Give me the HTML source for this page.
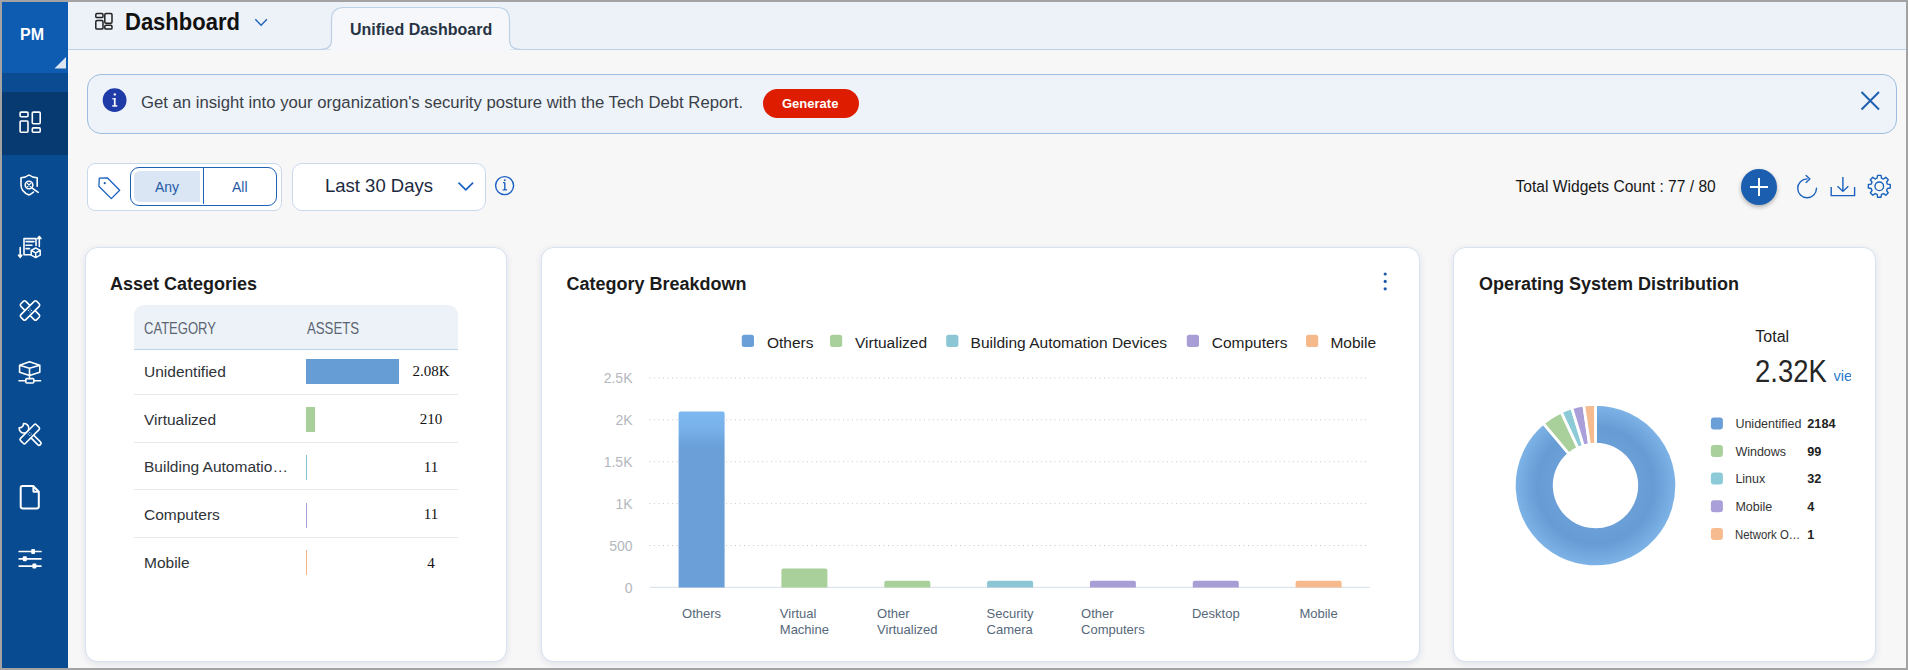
<!DOCTYPE html>
<html><head><meta charset="utf-8">
<style>
*{box-sizing:border-box;margin:0;padding:0}
html,body{width:1908px;height:670px;overflow:hidden;background:#f7f7f8}
body{font-family:"Liberation Sans",sans-serif;position:relative}
.a{position:absolute;white-space:nowrap;line-height:1}
#border{position:absolute;left:0;top:0;width:1908px;height:670px;border:2px solid #a3a3a3;z-index:50}
.blk{position:absolute}
.ico{position:absolute;overflow:visible}
.card{position:absolute;top:247px;height:415px;background:#fff;border:1px solid #d6e2f0;border-radius:12.5px;box-shadow:0 2px 7px rgba(20,40,70,0.10)}
</style></head><body>
<div id="border"></div>

<!-- SIDEBAR -->
<div class="blk" style="left:2px;top:2px;width:66px;height:666px;background:#084b91"></div>
<div class="blk" style="left:2px;top:2px;width:66px;height:71px;background:#0d5cb2"></div>
<div class="blk" style="left:2px;top:73px;width:66px;height:19px;background:#0a4b92"></div>
<div class="blk" style="left:2px;top:92px;width:66px;height:63px;background:#083a72"></div>
<div class="a" style="left:20px;top:26px;font:bold 16px 'Liberation Sans';color:#fff">PM</div>
<svg class="ico" style="left:0;top:0" width="1908" height="670" fill="none" stroke="#fff" stroke-width="1.6" stroke-linecap="round" stroke-linejoin="round">
  <path d="M66 57 L66 68.5 L54.5 68.5 Z" fill="#dce6f2" stroke="none"/>
  <!-- dashboard -->
  <rect x="20.1" y="112.1" width="7.9" height="4.7" rx="1"/>
  <rect x="20.1" y="121" width="7.9" height="11.3" rx="1"/>
  <rect x="32.3" y="112.1" width="7.9" height="11.6" rx="1"/>
  <rect x="32.3" y="127.9" width="7.9" height="4.4" rx="1"/>
  <!-- shield -->
  <path d="M37.2 186.2 V177.8 C33.5 177.6 31 176.6 29 175 C27 176.6 24.5 177.6 21 177.8 V185 C21 189.5 24.5 193.2 29 195 C30.8 194.3 32.3 193.3 33.5 192"/>
  <circle cx="29" cy="185" r="3.8" stroke-width="1.6"/>
  <path d="M27.4 183.4 L30.6 186.6 M30.6 183.4 L27.4 186.6" stroke-width="1.2"/>
  <path d="M31.8 187.8 L38.2 192.4"/>
  <!-- doc w/ cube -->
  <path d="M30.5 254.8 H24 V238.6 H36 V245.5" />
  <path d="M26 241.6 H34 M26 245.2 H32 M26 248.6 H29.5" />
  <path d="M20.2 247.5 V257 M18.6 255.2 L20.2 257.3 L21.8 255.2" />
  <path d="M39.3 246.5 V236.8 M37.7 238.6 L39.3 236.5 L40.9 238.6" />
  <path d="M35.7 248 L40.2 250.4 V255.2 L35.7 257.6 L31.2 255.2 V250.4 Z M31.2 250.4 L35.7 252.8 L40.2 250.4 M35.7 252.8 V257.6" stroke-width="1.5"/>
  <!-- bandage -->
  <g transform="translate(30 310.5)">
    <rect x="-11.2" y="-3.5" width="22.4" height="7" rx="1.8" transform="rotate(45)"/>
    <rect x="-11.2" y="-3.5" width="22.4" height="7" rx="1.8" transform="rotate(-45)" fill="#084b91"/>
    <circle cx="0" cy="-1.5" r="0.55" fill="#fff" stroke="none"/><circle cx="0" cy="1.5" r="0.55" fill="#fff" stroke="none"/><circle cx="-1.5" cy="0" r="0.55" fill="#fff" stroke="none"/><circle cx="1.5" cy="0" r="0.55" fill="#fff" stroke="none"/>
  </g>
  <!-- network cube -->
  <path d="M29.5 361.8 L39.8 365.2 V372.2 L29.5 375.6 L19.6 372.2 V365.2 Z M19.6 365.2 L29.5 368.2 L39.8 365.2 M29.5 368.2 V375.6 M29.5 375.6 V378.6 M19 380.8 H25.6 M33.8 380.8 H40.6"/>
  <rect x="25.8" y="378.6" width="8" height="4.4" rx="1"/>
  <!-- tools -->
  <g transform="translate(29.8 434)">
    <rect x="0" y="-1.9" width="15" height="3.8" rx="1.9" transform="rotate(45)"/>
    <path d="M-6.3 -10.5 A4.8 4.8 0 1 1 -10.6 -6.2 L-8.3 -6.6 L-6.6 -8.3 Z" fill="#084b91"/>
    <rect x="-11.2" y="-3.5" width="22.4" height="7" rx="1.6" transform="rotate(-45)" fill="#084b91"/>
    <circle cx="0" cy="-1.5" r="0.55" fill="#fff" stroke="none"/><circle cx="0" cy="1.5" r="0.55" fill="#fff" stroke="none"/><circle cx="-1.5" cy="0" r="0.55" fill="#fff" stroke="none"/><circle cx="1.5" cy="0" r="0.55" fill="#fff" stroke="none"/>
  </g>
  <!-- document -->
  <path d="M33.2 486 H22.5 Q20.7 486 20.7 487.8 V506.6 Q20.7 508.4 22.5 508.4 H37 Q38.8 508.4 38.8 506.6 V491.8 Z M33.4 486.2 V491.2 Q33.4 491.8 34 491.8 H38.6" stroke-width="2"/>
  <!-- sliders -->
  <path d="M19.2 551.5 H41 M19.2 558.8 H41 M19.2 566.1 H41" stroke-width="1.7"/>
  <rect x="31.2" y="549" width="3.8" height="5" rx="1" fill="#fff" stroke="none"/>
  <rect x="22.8" y="556.3" width="4" height="5" rx="1" fill="#fff" stroke="none"/>
  <rect x="32.4" y="563.6" width="4" height="5" rx="1" fill="#fff" stroke="none"/>
</svg>

<!-- HEADER -->
<div class="blk" style="left:68px;top:2px;width:1838px;height:48px;background:#edf1f8;border-bottom:1px solid #bcd0e6"></div>
<svg class="ico" style="left:0;top:0" width="1908" height="60" fill="none" stroke="#222" stroke-width="1.5">
  <rect x="95.8" y="13.6" width="7.2" height="4" rx="1.2"/>
  <rect x="95.8" y="20.5" width="7.2" height="8.6" rx="1.2"/>
  <rect x="104.8" y="13.6" width="7.2" height="9.6" rx="1.2"/>
  <rect x="104.8" y="25.2" width="7.2" height="3.9" rx="1.2"/>
  <path d="M255.3 19.3 L261.1 25.2 L266.9 19.3" stroke="#1f62b8" stroke-width="1.4"/>
  <!-- tab -->
  <path d="M320 49.5 Q331.5 49.5 331.5 40 V20 Q331.5 7.5 344 7.5 H497 Q509.5 7.5 509.5 20 V40 Q509.5 49.5 521 49.5" fill="#f5f7fa" stroke="#bcd0e6" stroke-width="1.2"/>
</svg>
<div class="blk" style="left:331px;top:48px;width:179px;height:3px;background:#f5f7fa"></div>
<div class="a" style="left:125px;top:8px;font:bold 22px 'Liberation Sans';color:#111;transform:scaleY(1.08);transform-origin:0 0">Dashboard</div>
<div class="a" style="left:350px;top:20.5px;font:bold 16px 'Liberation Sans';color:#273444">Unified Dashboard</div>

<!-- BANNER -->
<div class="blk" style="left:87px;top:74px;width:1810px;height:60px;background:#eef3fa;border:1px solid #9dbde3;border-radius:14px"></div>
<svg class="ico" style="left:0;top:60px" width="1908" height="80">
  <circle cx="114.6" cy="40.2" r="11.9" fill="#1e3ba8"/>
  <rect x="113.9" y="38.2" width="1.7" height="8.3" fill="#fff"/>
  <rect x="112.2" y="45.2" width="5.1" height="1.4" fill="#fff"/>
  <rect x="112.3" y="38.2" width="3.3" height="1.2" fill="#fff"/>
  <circle cx="114.8" cy="34.4" r="1.2" fill="#fff"/>
  <path d="M1861.5 32 L1879 49.5 M1879 32 L1861.5 49.5" stroke="#1f5fb0" stroke-width="2"/>
</svg>
<div class="a" style="left:141px;top:93px;font:16.7px 'Liberation Sans';color:#3a3f47">Get an insight into your organization's security posture with the Tech Debt Report.</div>
<div class="blk" style="left:763px;top:89px;width:96px;height:29px;background:#dd1c00;border-radius:15px"></div>
<div class="a" style="left:782px;top:96px;font:bold 13px 'Liberation Sans';color:#fff">Generate</div>

<!-- FILTERS -->
<div class="blk" style="left:87px;top:163px;width:195px;height:48px;background:#fff;border:1px solid #c9d9ec;border-radius:8px"></div>
<div class="blk" style="left:130px;top:167px;width:147px;height:39px;background:#fff;border:1.5px solid #1c62b6;border-radius:9px;overflow:hidden">
  <div class="blk" style="left:2.5px;top:2.5px;width:66.5px;height:31.5px;background:#dae6f3;border-radius:6px 0 0 6px"></div>
  <div class="blk" style="left:71.6px;top:0;width:1.4px;height:36px;background:#1c62b6"></div>
</div>
<div class="a" style="left:155px;top:179px;font:14px 'Liberation Sans';color:#1f5aa8">Any</div>
<div class="a" style="left:232px;top:179px;font:14px 'Liberation Sans';color:#1f5aa8">All</div>
<div class="blk" style="left:292px;top:163px;width:194px;height:48px;background:#fff;border:1px solid #c9d9ec;border-radius:10px"></div>
<svg class="ico" style="left:0;top:150px" width="600" height="70" fill="none" stroke="#1a60c0" stroke-width="1.3" stroke-linejoin="round">
  <path d="M99.3 28.2 L107.3 27.8 L119.7 40.2 L111.3 48.6 L98.9 36.2 Z"/>
  <circle cx="104.7" cy="33.2" r="1.1" fill="#1f5aa8" stroke="none"/>
  <path d="M458.5 32.6 L465.8 39.9 L473.1 32.6" stroke-width="1.6"/>
  <circle cx="504.6" cy="35.6" r="9" stroke-width="1.4"/>
  <path d="M504.8 32.6 V39.8 M502.6 39.9 H507 M503 32.6 H504.8" stroke-width="1.4"/>
  <circle cx="504.8" cy="30.2" r="0.9" fill="#1f5aa8" stroke="none"/>
</svg>
<div class="a" style="left:325px;top:175px;font:18.5px 'Liberation Sans';color:#1b2a3e">Last 30 Days</div>

<div class="a" style="left:1515.5px;top:177.8px;font:15.6px 'Liberation Sans';color:#161616">Total Widgets Count : 77 / 80</div>
<div class="blk" style="left:1741px;top:169px;width:36px;height:36px;background:#1b5eb0;border-radius:50%;box-shadow:0 2px 4px rgba(0,0,0,0.3)"></div>
<svg class="ico" style="left:0;top:150px" width="1908" height="70" fill="none" stroke="#1a62bd" stroke-width="1.4" stroke-linecap="round" stroke-linejoin="round">
  <path d="M1750 37 H1768 M1759 28 V46" stroke="#fff" stroke-width="2" stroke-linecap="butt"/>
  <path d="M1816.5 38.3 A9.4 9.4 0 1 1 1807.1 28.9"/>
  <path d="M1806.1 25.5 L1809.9 29 L1806.1 32.4"/>
  <path d="M1842.9 26.9 V41.3 M1837.5 36.2 L1842.9 41.4 L1848.3 36.2 M1831.2 37 V45.6 H1854.6 V37" stroke-linecap="butt" stroke-linejoin="miter"/>
  <path d="M1877.13 178.19 L1877.56 175.34 L1881.04 175.34 L1881.47 178.19 L1883.50 179.03 L1885.82 177.32 L1888.28 179.78 L1886.57 182.10 L1887.41 184.13 L1890.26 184.56 L1890.26 188.04 L1887.41 188.47 L1886.57 190.50 L1888.28 192.82 L1885.82 195.28 L1883.50 193.57 L1881.47 194.41 L1881.04 197.26 L1877.56 197.26 L1877.13 194.41 L1875.10 193.57 L1872.78 195.28 L1870.32 192.82 L1872.03 190.50 L1871.19 188.47 L1868.34 188.04 L1868.34 184.56 L1871.19 184.13 L1872.03 182.10 L1870.32 179.78 L1872.78 177.32 L1875.10 179.03 Z" transform="translate(0 -150)"/>
  <circle cx="1879.3" cy="36.3" r="4.3"/>
</svg>

<!-- CARDS -->
<!-- CARD 1 -->
<div class="card" style="left:85px;width:422px"></div>
<div class="a" style="left:110px;top:274.28px;font:bold 18px 'Liberation Sans';color:#1b1b1b;">Asset Categories</div>
<div class="blk" style="left:134px;top:305px;width:324px;height:44.5px;background:#edf2f9;border-radius:10px 10px 0 0;border-bottom:1.5px solid #bcd2e8"></div>
<div class="a" style="left:144px;top:319.36px;font:16.5px 'Liberation Sans';color:#5b6571;transform:scaleX(0.79);transform-origin:0 0">CATEGORY</div>
<div class="a" style="left:306.5px;top:319.36px;font:16.5px 'Liberation Sans';color:#5b6571;transform:scaleX(0.80);transform-origin:0 0">ASSETS</div>
<div class="blk" style="left:134px;top:393.8px;width:324px;height:1px;background:#e6e9ed"></div>
<div class="blk" style="left:134px;top:441.9px;width:324px;height:1px;background:#e6e9ed"></div>
<div class="blk" style="left:134px;top:489.0px;width:324px;height:1px;background:#e6e9ed"></div>
<div class="blk" style="left:134px;top:536.7px;width:324px;height:1px;background:#e6e9ed"></div>
<div class="a" style="left:144px;top:362.98px;font:15.5px 'Liberation Sans';color:#2f3338;">Unidentified</div>
<div class="blk" style="left:305.9px;top:358.6px;width:93px;height:25.3px;background:#669dd4"></div>
<div class="a" style="left:381px;width:100px;text-align:center;top:363.24px;font:15px 'Liberation Serif';color:#111">2.08K</div>
<div class="a" style="left:144px;top:410.58px;font:15.5px 'Liberation Sans';color:#2f3338;">Virtualized</div>
<div class="blk" style="left:305.9px;top:406.8px;width:9.3px;height:25.3px;background:#a9d09b"></div>
<div class="a" style="left:381px;width:100px;text-align:center;top:410.84px;font:15px 'Liberation Serif';color:#111">210</div>
<div class="a" style="left:144px;top:458.48px;font:15.5px 'Liberation Sans';color:#2f3338;">Building Automatio…</div>
<div class="blk" style="left:305.9px;top:454.9px;width:1.2px;height:25.3px;background:#7fc2d2"></div>
<div class="a" style="left:381px;width:100px;text-align:center;top:458.74px;font:15px 'Liberation Serif';color:#111">11</div>
<div class="a" style="left:144px;top:506.08px;font:15.5px 'Liberation Sans';color:#2f3338;">Computers</div>
<div class="blk" style="left:305.9px;top:502.7px;width:1.2px;height:25.3px;background:#a99ed2"></div>
<div class="a" style="left:381px;width:100px;text-align:center;top:506.34px;font:15px 'Liberation Serif';color:#111">11</div>
<div class="a" style="left:144px;top:554.48px;font:15.5px 'Liberation Sans';color:#2f3338;">Mobile</div>
<div class="blk" style="left:305.9px;top:549.6px;width:1.2px;height:25.3px;background:#f3b487"></div>
<div class="a" style="left:381px;width:100px;text-align:center;top:554.74px;font:15px 'Liberation Serif';color:#111">4</div>
<!-- CARD 2 -->
<div class="card" style="left:541px;width:879px"></div>
<div class="a" style="left:566.5px;top:274.28px;font:bold 18px 'Liberation Sans';color:#1b1b1b;">Category Breakdown</div>
<svg class="ico" style="left:0;top:0" width="1908" height="670">
<circle cx="1385.2" cy="274" r="1.6" fill="#1f5aa8"/>
<circle cx="1385.2" cy="281.4" r="1.6" fill="#1f5aa8"/>
<circle cx="1385.2" cy="288.8" r="1.6" fill="#1f5aa8"/>
<rect x="741.8" y="334.8" width="12.2" height="12.2" rx="2.5" fill="#6a9fd8"/>
<rect x="830" y="334.8" width="12.2" height="12.2" rx="2.5" fill="#a9d09b"/>
<rect x="946.2" y="334.8" width="12.2" height="12.2" rx="2.5" fill="#8cc6d4"/>
<rect x="1186.8" y="334.8" width="12.2" height="12.2" rx="2.5" fill="#a99dd6"/>
<rect x="1306" y="334.8" width="12.2" height="12.2" rx="2.5" fill="#f5b98c"/>
<line x1="649.5" y1="545.5" x2="1366.5" y2="545.5" stroke="#c5cad0" stroke-width="1" stroke-dasharray="1 3.5"/>
<line x1="649.5" y1="503.6" x2="1366.5" y2="503.6" stroke="#c5cad0" stroke-width="1" stroke-dasharray="1 3.5"/>
<line x1="649.5" y1="461.7" x2="1366.5" y2="461.7" stroke="#c5cad0" stroke-width="1" stroke-dasharray="1 3.5"/>
<line x1="649.5" y1="419.8" x2="1366.5" y2="419.8" stroke="#c5cad0" stroke-width="1" stroke-dasharray="1 3.5"/>
<line x1="649.5" y1="377.9" x2="1366.5" y2="377.9" stroke="#c5cad0" stroke-width="1" stroke-dasharray="1 3.5"/>
<line x1="649.5" y1="587.4" x2="1369.5" y2="587.4" stroke="#dde5ea" stroke-width="1.2"/>
<defs><linearGradient id="gb" x1="0" y1="0" x2="0" y2="1"><stop offset="0" stop-color="#7db8f1"/><stop offset="0.1" stop-color="#78b1ea"/><stop offset="0.2" stop-color="#6a9fd8"/><stop offset="1" stop-color="#6a9fd8"/></linearGradient></defs>
<path d="M678.6 587.4 V413.5 Q678.6 411.5 680.6 411.5 H722.6 Q724.6 411.5 724.6 413.5 V587.4 Z" fill="url(#gb)"/>
<path d="M781.4 587.4 V570.6 Q781.4 568.6 783.4 568.6 H825.4 Q827.4 568.6 827.4 570.6 V587.4 Z" fill="#a9d09b"/>
<path d="M884.3 587.4 V582.7 Q884.3 580.7 886.3 580.7 H928.3 Q930.3 580.7 930.3 582.7 V587.4 Z" fill="#a9d09b"/>
<path d="M987.1 587.4 V582.7 Q987.1 580.7 989.1 580.7 H1031.1 Q1033.1 580.7 1033.1 582.7 V587.4 Z" fill="#8cc6d4"/>
<path d="M1089.9 587.4 V582.7 Q1089.9 580.7 1091.9 580.7 H1133.9 Q1135.9 580.7 1135.9 582.7 V587.4 Z" fill="#a99dd6"/>
<path d="M1192.8 587.4 V582.7 Q1192.8 580.7 1194.8 580.7 H1236.8 Q1238.8 580.7 1238.8 582.7 V587.4 Z" fill="#a99dd6"/>
<path d="M1295.6 587.4 V582.7 Q1295.6 580.7 1297.6 580.7 H1339.6 Q1341.6 580.7 1341.6 582.7 V587.4 Z" fill="#f5b98c"/>
</svg>
<div class="a" style="left:767px;top:333.68px;font:15.5px 'Liberation Sans';color:#222;">Others</div>
<div class="a" style="left:855px;top:333.68px;font:15.5px 'Liberation Sans';color:#222;">Virtualized</div>
<div class="a" style="left:970.6px;top:333.68px;font:15.5px 'Liberation Sans';color:#222;">Building Automation Devices</div>
<div class="a" style="left:1211.7px;top:333.68px;font:15.5px 'Liberation Sans';color:#222;">Computers</div>
<div class="a" style="left:1330.4px;top:333.68px;font:15.5px 'Liberation Sans';color:#222;">Mobile</div>
<div class="a" style="left:582.5px;width:50px;text-align:right;top:579.96px;font:14px 'Liberation Sans';color:#b3b8be">0</div>
<div class="a" style="left:582.5px;width:50px;text-align:right;top:538.06px;font:14px 'Liberation Sans';color:#b3b8be">500</div>
<div class="a" style="left:582.5px;width:50px;text-align:right;top:496.15px;font:14px 'Liberation Sans';color:#b3b8be">1K</div>
<div class="a" style="left:582.5px;width:50px;text-align:right;top:454.25px;font:14px 'Liberation Sans';color:#b3b8be">1.5K</div>
<div class="a" style="left:582.5px;width:50px;text-align:right;top:412.35px;font:14px 'Liberation Sans';color:#b3b8be">2K</div>
<div class="a" style="left:582.5px;width:50px;text-align:right;top:370.45px;font:14px 'Liberation Sans';color:#b3b8be">2.5K</div>
<div class="a" style="left:641.6px;width:120px;top:606.37px"><div style="width:max-content;margin:0 auto;text-align:left;font:13px/16px 'Liberation Sans';color:#56687a">Others</div></div>
<div class="a" style="left:744.4px;width:120px;top:606.37px"><div style="width:max-content;margin:0 auto;text-align:left;font:13px/16px 'Liberation Sans';color:#56687a">Virtual<br>Machine</div></div>
<div class="a" style="left:847.3px;width:120px;top:606.37px"><div style="width:max-content;margin:0 auto;text-align:left;font:13px/16px 'Liberation Sans';color:#56687a">Other<br>Virtualized</div></div>
<div class="a" style="left:950.1px;width:120px;top:606.37px"><div style="width:max-content;margin:0 auto;text-align:left;font:13px/16px 'Liberation Sans';color:#56687a">Security<br>Camera</div></div>
<div class="a" style="left:1052.9px;width:120px;top:606.37px"><div style="width:max-content;margin:0 auto;text-align:left;font:13px/16px 'Liberation Sans';color:#56687a">Other<br>Computers</div></div>
<div class="a" style="left:1155.8px;width:120px;top:606.37px"><div style="width:max-content;margin:0 auto;text-align:left;font:13px/16px 'Liberation Sans';color:#56687a">Desktop</div></div>
<div class="a" style="left:1258.6px;width:120px;top:606.37px"><div style="width:max-content;margin:0 auto;text-align:left;font:13px/16px 'Liberation Sans';color:#56687a">Mobile</div></div>
<!-- CARD 3 -->
<div class="card" style="left:1453px;width:423px"></div>
<div class="a" style="left:1479px;top:274.28px;font:bold 18px 'Liberation Sans';color:#1b1b1b;">Operating System Distribution</div>
<div class="a" style="left:1755.3px;top:328.22px;font:16px 'Liberation Sans';color:#222;">Total</div>
<div class="a" style="left:1754.8px;top:353.56px;font:31px 'Liberation Sans';color:#262626;transform:scaleX(0.885);transform-origin:0 0">2.32K</div>
<div class="a" style="left:1833.5px;top:367.73px;width:17.5px;overflow:hidden;font:14.5px 'Liberation Sans';color:#2b7bd0">view</div>
<svg class="ico" style="left:0;top:0" width="1908" height="670">
<defs><radialGradient id="dg" gradientUnits="userSpaceOnUse" cx="1595.5" cy="485.5" r="81.2"><stop offset="0.53" stop-color="#6b9fd7"/><stop offset="0.72" stop-color="#669bd4"/><stop offset="1" stop-color="#7fb4e8"/></radialGradient></defs>
<path d="M1595.50 404.30 A81.2 81.2 0 1 1 1543.31 423.30 L1568.95 453.86 A41.3 41.3 0 1 0 1595.50 444.20 Z" fill="url(#dg)" stroke="#fff" stroke-width="2.8" stroke-linejoin="round"/>
<path d="M1543.31 423.30 A81.2 81.2 0 0 1 1561.18 411.91 L1578.05 448.07 A41.3 41.3 0 0 0 1568.95 453.86 Z" fill="#a9d09b" stroke="#fff" stroke-width="2.8" stroke-linejoin="round"/>
<path d="M1561.18 411.91 A81.2 81.2 0 0 1 1571.76 407.85 L1583.43 446.00 A41.3 41.3 0 0 0 1578.05 448.07 Z" fill="#8ccad8" stroke="#fff" stroke-width="2.8" stroke-linejoin="round"/>
<path d="M1571.76 407.85 A81.2 81.2 0 0 1 1583.78 405.15 L1589.54 444.63 A41.3 41.3 0 0 0 1583.43 446.00 Z" fill="#ab9fd9" stroke="#fff" stroke-width="2.8" stroke-linejoin="round"/>
<path d="M1583.78 405.15 A81.2 81.2 0 0 1 1595.50 404.30 L1595.50 444.20 A41.3 41.3 0 0 0 1589.54 444.63 Z" fill="#f6bb8e" stroke="#fff" stroke-width="2.8" stroke-linejoin="round"/>
<rect x="1710.9" y="417.4" width="12" height="12" rx="3" fill="#6a9fd8"/>
<rect x="1710.9" y="445.0" width="12" height="12" rx="3" fill="#a9d09b"/>
<rect x="1710.9" y="472.6" width="12" height="12" rx="3" fill="#8ccad8"/>
<rect x="1710.9" y="500.3" width="12" height="12" rx="3" fill="#ab9fd9"/>
<rect x="1710.9" y="527.9" width="12" height="12" rx="3" fill="#f6bb8e"/>
</svg>
<div class="a" style="left:1735.4px;top:417.13px;font:12.5px 'Liberation Sans';color:#333;">Unidentified</div>
<div class="a" style="left:1807.3px;top:417.11px;font:bold 12.7px 'Liberation Sans';color:#222;">2184</div>
<div class="a" style="left:1735.4px;top:444.75px;font:12.5px 'Liberation Sans';color:#333;">Windows</div>
<div class="a" style="left:1807.3px;top:444.73px;font:bold 12.7px 'Liberation Sans';color:#222;">99</div>
<div class="a" style="left:1735.4px;top:472.37px;font:12.5px 'Liberation Sans';color:#333;">Linux</div>
<div class="a" style="left:1807.3px;top:472.35px;font:bold 12.7px 'Liberation Sans';color:#222;">32</div>
<div class="a" style="left:1735.4px;top:499.99px;font:12.5px 'Liberation Sans';color:#333;">Mobile</div>
<div class="a" style="left:1807.3px;top:499.97px;font:bold 12.7px 'Liberation Sans';color:#222;">4</div>
<div class="a" style="left:1735.4px;top:527.61px;font:12.5px 'Liberation Sans';color:#333;transform:scaleX(0.91);transform-origin:0 0">Network O…</div>
<div class="a" style="left:1807.3px;top:527.59px;font:bold 12.7px 'Liberation Sans';color:#222;">1</div>
<!-- /CARDS -->
</body></html>
